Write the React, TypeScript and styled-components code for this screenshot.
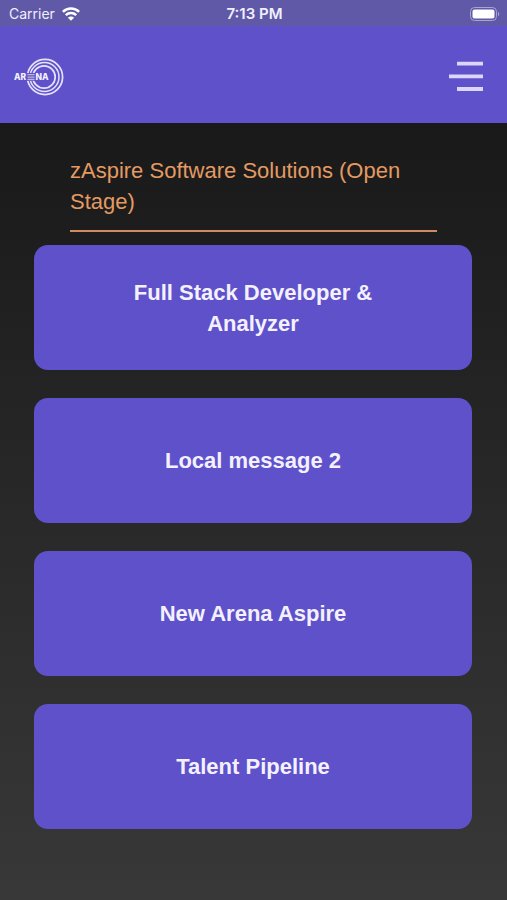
import React from "react";
import styled, { createGlobalStyle } from "styled-components";

const GlobalStyle = createGlobalStyle`
  * { box-sizing: border-box; }
  body {
    margin: 0;
    background: #383838;
    font-family: "Liberation Sans", Arial, sans-serif;
  }
`;

const Screen = styled.div`
  display: flex;
  flex-direction: column;
  min-height: 100vh;
  background: linear-gradient(#191919 123px, #383838);
`;

const StatusBar = styled.div`
  display: grid;
  grid-template-columns: 1fr auto 1fr;
  align-items: center;
  height: 26px;
  padding: 1px 7px 0 9px;
  background: #5f59a8;
  color: #f1effb;
  font-family: Inter, sans-serif;
  font-size: 14px;
  line-height: 18px;
`;

const Carrier = styled.div`
  display: flex;
  align-items: center;
  gap: 7px;
`;

const Clock = styled.time`
  font-size: 15px;
  font-weight: 600;
`;

const BatterySlot = styled.div`
  display: flex;
  justify-content: flex-end;
`;

const Header = styled.header`
  display: flex;
  align-items: center;
  justify-content: space-between;
  height: 97px;
  padding: 4px 23px 0 14px;
  background: #5f51ca;
`;

const HomeLink = styled.a`
  display: block;
  line-height: 0;
`;

const MenuButton = styled.button`
  display: block;
  padding: 0;
  border: 0;
  background: none;
  line-height: 0;
  cursor: pointer;
`;

const Content = styled.main`
  display: flex;
  flex-direction: column;
  padding: 32px 35px 70px 34px;
`;

const StageTitle = styled.h1`
  margin: 0 35px 13px 36px;
  padding-bottom: 13px;
  border-bottom: 2px solid #d08b62;
  color: #e39a63;
  font-size: 22px;
  font-weight: 400;
  line-height: 31px;
`;

const CardList = styled.div`
  display: grid;
  gap: 28px;
`;

const Card = styled.button`
  display: flex;
  align-items: center;
  justify-content: center;
  min-height: 125px;
  padding: 16px 84px;
  border: 0;
  border-radius: 14px;
  background: #5f51ca;
  color: #f4f1ff;
  font-family: inherit;
  font-size: 22px;
  font-weight: 700;
  line-height: 31px;
  text-align: center;
  cursor: pointer;
`;

const WifiIcon = () => (
  <svg width="18" height="14" viewBox="0 0 18 14" fill="none" stroke="#fff" strokeWidth="2.5" aria-hidden="true">
    <path d="M0.9 4.9a11.5 11.5 0 0 1 16.2 0" />
    <path d="M3.8 8.1a7.4 7.4 0 0 1 10.4 0" />
    <path d="M9 13.8 5.9 10.7a4.4 4.4 0 0 1 6.2 0z" fill="#fff" stroke="none" />
  </svg>
);

const BatteryIcon = () => (
  <svg width="31" height="14" viewBox="0 0 31 14" role="img" aria-label="Battery full">
    <rect x="1.5" y="0.5" width="26" height="13" rx="4" fill="none" stroke="#a9a4d6" />
    <rect x="3.5" y="2.5" width="22" height="9" rx="2" fill="#fff" />
    <path d="M29 4.8a2.5 2.5 0 0 1 0 4.4z" fill="#a9a4d6" />
  </svg>
);

const ArenaLogo = () => (
  <svg width="51" height="38" viewBox="0 0 51 38" role="img" aria-label="Arena">
    <g fill="none" stroke="#e6e2fa">
      <circle cx="31" cy="19" r="17.6" strokeWidth="1.7" />
      <circle cx="30.5" cy="19" r="14.5" strokeWidth="1.5" />
      <circle cx="30" cy="19" r="11.2" strokeWidth="1.7" />
    </g>
    <rect x="0" y="15" width="35" height="8" fill="#5f51ca" />
    <g fill="#f4f1ff" fontFamily="Inter, sans-serif" fontSize="8.5" fontWeight="800">
      <text x="0" y="22">AR</text>
      <text x="21.5" y="22">NA</text>
    </g>
    <path d="M13.5 16.7h7M13.5 19.1h7M13.5 21.5h7" stroke="#c1b5d8" strokeWidth="1.3" />
  </svg>
);

const MenuIcon = () => (
  <svg width="36" height="32" viewBox="0 0 36 32" fill="none" stroke="#dcd6fb" strokeWidth="3.8" aria-hidden="true">
    <path d="M9 2.7h26M1 15.4h34M9 28h26" />
  </svg>
);

const stages = [
  "Full Stack Developer & Analyzer",
  "Local message 2",
  "New Arena Aspire",
  "Talent Pipeline",
];

export default function App() {
  return (
    <>
      <GlobalStyle />
      <Screen>
        <StatusBar>
          <Carrier>
            Carrier
            <WifiIcon />
          </Carrier>
          <Clock>7:13 PM</Clock>
          <BatterySlot>
            <BatteryIcon />
          </BatterySlot>
        </StatusBar>
        <Header>
          <HomeLink href="#home">
            <ArenaLogo />
          </HomeLink>
          <MenuButton type="button" aria-label="Menu">
            <MenuIcon />
          </MenuButton>
        </Header>
        <Content>
          <StageTitle>zAspire Software Solutions (Open Stage)</StageTitle>
          <CardList>
            {stages.map((name) => (
              <Card key={name} type="button">
                {name}
              </Card>
            ))}
          </CardList>
        </Content>
      </Screen>
    </>
  );
}
